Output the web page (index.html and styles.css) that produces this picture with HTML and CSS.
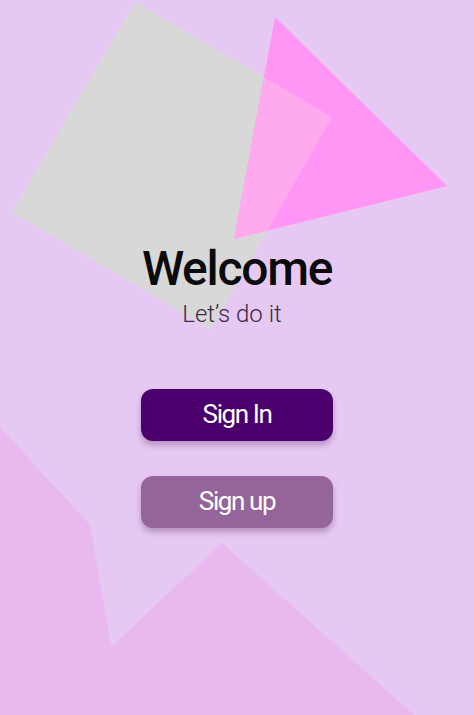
FILE: index.html
```html
<!DOCTYPE html>
<html>
<head>
<meta charset="utf-8">
<link rel="stylesheet" href="styles.css">
</head>
<body>
<div class="screen">
  <svg class="backdrop" width="474" height="715" viewBox="0 0 474 715" xmlns="http://www.w3.org/2000/svg">
    <defs>
      <clipPath id="sq">
        <polygon points="135,2 332,117 211,330 12,212"/>
      </clipPath>
    </defs>
    <polygon points="135,2 332,117 211,330 12,212" fill="#d9d8d9"/>
    <polygon points="275,17 447,186 234,239" fill="#ff96f6"/>
    <polygon points="275,17 447,186 234,239" fill="#ffaaee" clip-path="url(#sq)"/>
    <polygon points="0,427 90,525 111,647 222,543 414,715 0,715" fill="#e8b8ef"/>
  </svg>
  <main class="content">
    <h1 class="title">Welcome</h1>
    <p class="subtitle">Let’s do it</p>
    <div class="actions">
      <button class="btn btn-primary">Sign In</button>
      <button class="btn btn-secondary">Sign up</button>
    </div>
  </main>
</div>
</body>
</html>
```
FILE: styles.css
```css
html, body {
  margin: 0;
  padding: 0;
}
body {
  background: #e6c9f2;
  font-family: Roboto, "Open Sans", sans-serif;
}
.screen {
  position: relative;
  width: 474px;
  height: 715px;
  overflow: hidden;
  background: #e6c9f2;
}
.backdrop {
  position: absolute;
  left: 0;
  top: 0;
  display: block;
}
.content {
  position: relative;
  display: flex;
  flex-direction: column;
  align-items: center;
  padding-top: 241px;
}
.title {
  margin: 0;
  font-size: 48px;
  line-height: 56px;
  font-weight: 500;
  letter-spacing: -1.3px;
  color: #0a0a0c;
}
.subtitle {
  margin: 2px 10px 0 0;
  font-size: 24px;
  line-height: 30px;
  font-weight: 300;
  letter-spacing: 0;
  color: #3b2a45;
}
.actions {
  display: flex;
  flex-direction: column;
  gap: 35px;
  margin-top: 60px;
}
.btn {
  width: 192px;
  height: 52px;
  border: none;
  border-radius: 12px;
  font-family: Roboto, "Open Sans", sans-serif;
  font-size: 26px;
  font-weight: 400;
  letter-spacing: -1.4px;
  color: #ffffff;
  box-shadow: 0 4px 6px rgba(90, 40, 100, 0.35);
  padding: 0 0 2px 0;
}
.btn-primary {
  background: #4b006d;
}
.btn-secondary {
  background: #94649a;
}
```
